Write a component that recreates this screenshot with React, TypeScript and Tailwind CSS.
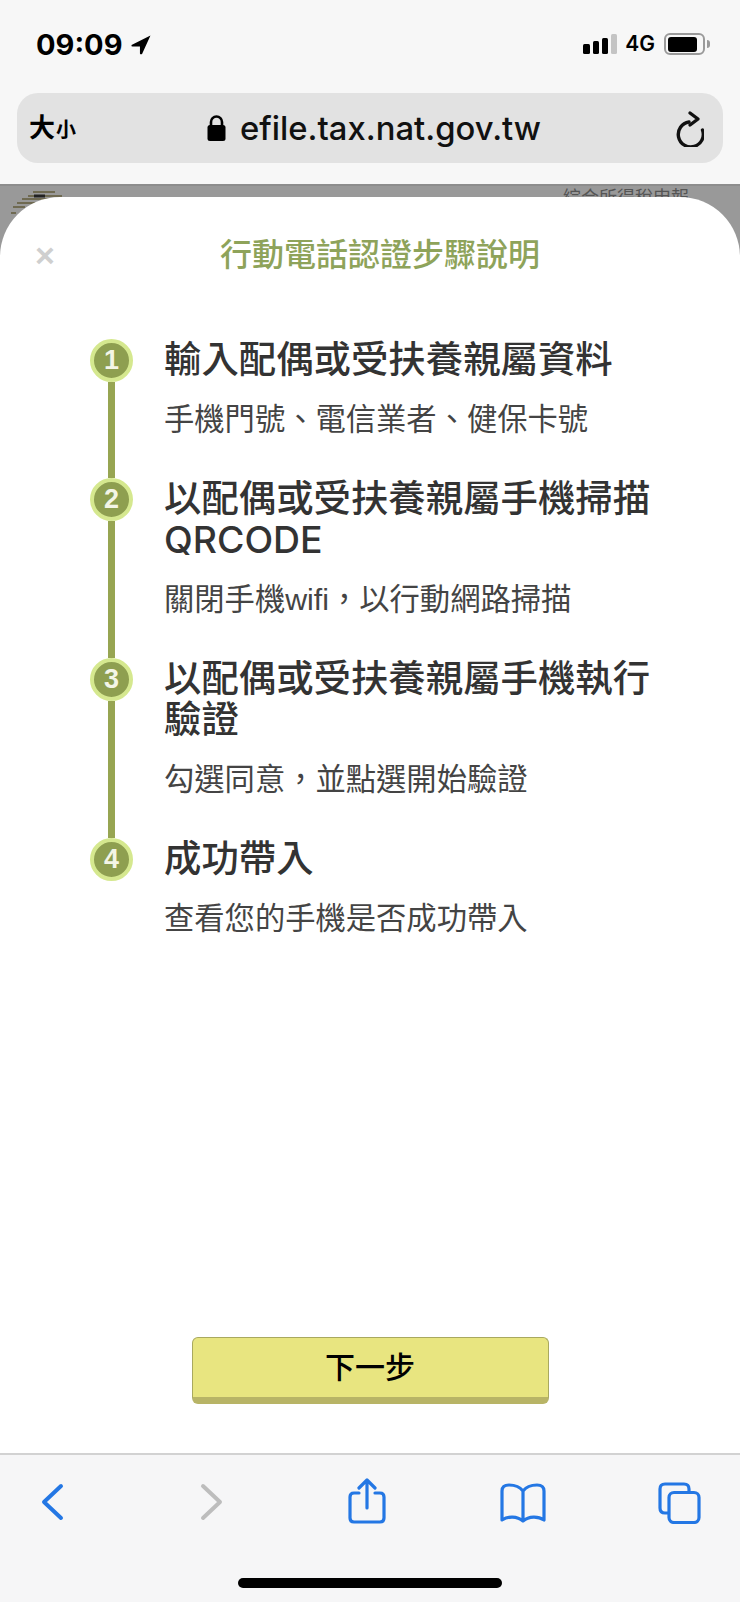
const cjk = "font-['Liberation_Sans','Noto_Sans_CJK_TC',sans-serif]";
const heading = "font-['Inter','Noto_Sans_CJK_TC',sans-serif]";
const comma = '\uFF0C';

const steps = [
  { n: 1, title: '輸入配偶或受扶養親屬資料', desc: '手機門號、電信業者、健保卡號' },
  { n: 2, title: '以配偶或受扶養親屬手機掃描 QRCODE', desc: `關閉手機wifi${comma}以行動網路掃描` },
  { n: 3, title: '以配偶或受扶養親屬手機執行驗證', desc: `勾選同意${comma}並點選開始驗證` },
  { n: 4, title: '成功帶入', desc: '查看您的手機是否成功帶入' },
];

function StatusBar() {
  return (
    <div className="flex h-[93px] items-start pl-[36px] pr-[30px] pt-[30px]">
      <span className="font-['Inter',sans-serif] text-[29px] font-bold leading-[30px] text-black">09:09</span>
      <svg className="ml-[9px] mt-[5px]" width="20" height="20" viewBox="0 0 19 19">
        <path d="M18.5 0.5 L0.5 9.5 Q0 11 1.5 11 L8.5 11 L8.5 17.5 Q9 19 10.5 18 Z" fill="#000" />
      </svg>
      <div className="ml-auto mt-[4px] flex items-end gap-[3px]">
        <div className="h-[10px] w-[7px] rounded-[1.5px] bg-black" />
        <div className="h-[13px] w-[6px] rounded-[1.5px] bg-black" />
        <div className="h-[16px] w-[6px] rounded-[1.5px] bg-black" />
        <div className="h-[20px] w-[6px] rounded-[1.5px] bg-[#c4c4c4]" />
      </div>
      <span className="ml-[8px] mt-[1px] font-['Inter',sans-serif] text-[21px] font-semibold leading-[26px] text-black">4G</span>
      <div className="ml-[9px] mt-[3px] flex h-[22px] w-[41px] items-center rounded-[6px] border-2 border-[#9a9a9a] p-[1.5px]">
        <div className="h-full w-[29px] rounded-[3px] bg-black" />
      </div>
      <div className="ml-[2px] mt-[10px] h-[8px] w-[3px] rounded-r-full bg-[#9a9a9a]" />
    </div>
  );
}

function UrlBar() {
  return (
    <div className="mx-[17px] flex h-[70px] items-center rounded-[21px] bg-[#e2e2e2] pl-[12px] pr-[19px]">
      <div className={`flex w-[49px] items-baseline font-bold text-black ${cjk}`}>
        <span className="text-[26px] leading-none">大</span>
        <span className="ml-[1px] text-[20px] leading-none">小</span>
      </div>
      <svg className="ml-[129px]" width="19" height="26" viewBox="0 0 19 26">
        <path d="M4 11 V7 a5.5 5.5 0 0 1 11 0 V11" fill="none" stroke="#000" strokeWidth="2.6" />
        <rect x="0.5" y="10" width="18" height="16" rx="2.5" fill="#000" />
      </svg>
      <span className="ml-[14px] font-['Inter',sans-serif] text-[32.8px] font-medium leading-none text-[#111]">efile.tax.nat.gov.tw</span>
      <svg className="ml-auto" width="30" height="38" viewBox="0 0 30 38">
        <path d="M15 13 A12.5 12.5 0 1 0 28.5 21" fill="none" stroke="#111" strokeWidth="3.4" strokeLinecap="round" />
        <path d="M16 4 L24 10 L16 16" fill="none" stroke="#111" strokeWidth="3.4" strokeLinecap="round" strokeLinejoin="round" />
      </svg>
    </div>
  );
}

function StepRow({ n, title, desc, last }: { n: number; title: string; desc: string; last: boolean }) {
  return (
    <div className="flex">
      <div className="flex w-[43px] shrink-0 flex-col items-center">
        <div className="flex h-[43px] w-[43px] shrink-0 items-center justify-center rounded-full border-[4px] border-[#d5e88f] bg-[#8e9f50] font-['Liberation_Sans',sans-serif] text-[27px] font-bold leading-none text-[#f3f5e6]">
          {n}
        </div>
        {!last && <div className="w-[7px] flex-1 bg-[#97a552]" />}
      </div>
      <div className={`ml-[31px] w-[500px] ${last ? '' : 'pb-[38px]'}`}>
        <div className={`text-[37.4px] font-medium leading-[41px] text-[#333] ${heading}`}>{title}</div>
        <div className={`mt-[19px] text-[30.3px] leading-[41px] text-[#444] ${cjk}`}>{desc}</div>
      </div>
    </div>
  );
}

function Sheet() {
  return (
    <div className="relative flex flex-1 flex-col rounded-t-[60px] bg-white">
      <div className="flex items-center pt-[37px]">
        <span className="ml-[34px] w-[22px] text-center font-['Liberation_Sans',sans-serif] text-[34px] font-bold leading-[42px] text-[#cfcfcf]">×</span>
        <h1 className={`flex-1 pr-[36px] text-center text-[32px] font-medium leading-[42px] text-[#8ea35a] ${cjk}`}>行動電話認證步驟說明</h1>
      </div>
      <div className="ml-[90px] mt-[63px]">
        {steps.map((s, i) => (
          <StepRow key={s.n} n={s.n} title={s.title} desc={s.desc} last={i === steps.length - 1} />
        ))}
      </div>
      <div className="mb-[49px] mt-auto flex justify-center">
        <button className={`h-[67px] w-[357px] rounded-[6px] border border-[#a9a95f] border-b-[7px] border-b-[#b8b466] bg-[#e8e580] text-[30px] font-medium text-black ${cjk}`}>
          下一步
        </button>
      </div>
    </div>
  );
}

function Toolbar() {
  const blue = '#2477e4';
  return (
    <div className="relative h-[149px] border-t-2 border-[#d2d2d2] bg-[#f6f6f7]">
      <div className="flex items-start pl-[41px] pt-[23px]">
        <svg className="mt-[5px]" width="24" height="38" viewBox="0 0 24 38">
          <path d="M20 3 L3 19 L20 35" fill="none" stroke={blue} strokeWidth="4" strokeLinecap="round" strokeLinejoin="round" />
        </svg>
        <svg className="ml-[135px] mt-[5px]" width="24" height="38" viewBox="0 0 24 38">
          <path d="M3 3 L20 19 L3 35" fill="none" stroke="#bdbdbd" strokeWidth="4" strokeLinecap="round" strokeLinejoin="round" />
        </svg>
        <svg className="ml-[124px]" width="38" height="46" viewBox="0 0 38 46">
          <path d="M11 15 H6 Q2 15 2 19 V40 Q2 44 6 44 H32 Q36 44 36 40 V19 Q36 15 32 15 H27" fill="none" stroke={blue} strokeWidth="3.2" strokeLinecap="round" />
          <path d="M19 30 V3 M11 10 L19 2 L27 10" fill="none" stroke={blue} strokeWidth="3.2" strokeLinecap="round" strokeLinejoin="round" />
        </svg>
        <svg className="ml-[114px] mt-[5px]" width="46" height="40" viewBox="0 0 46 40">
          <path d="M23 8 C20 4 15 2 9 2 Q2 2 2 8 V37 C8 33 17 33 23 38 C29 33 38 33 44 37 V8 Q44 2 37 2 C31 2 26 4 23 8 Z M23 8 V38" fill="none" stroke={blue} strokeWidth="3.2" strokeLinejoin="round" strokeLinecap="round" />
        </svg>
        <svg className="ml-[112px] mt-[4px]" width="43" height="42" viewBox="0 0 43 42">
          <path d="M10 31 H7 Q2 31 2 26 V7 Q2 2 7 2 H26 Q31 2 31 7 V10" fill="none" stroke={blue} strokeWidth="3.2" />
          <rect x="11" y="10.5" width="30" height="30" rx="5" fill="none" stroke={blue} strokeWidth="3.2" />
        </svg>
      </div>
      <div className="absolute bottom-[14px] left-[238px] h-[10px] w-[264px] rounded-full bg-black" />
    </div>
  );
}

export default function App() {
  return (
    <div className="flex h-[1602px] w-[740px] flex-col overflow-hidden bg-[#f7f7f7]">
      <div className="h-[184px] shrink-0">
        <StatusBar />
        <UrlBar />
      </div>
      <div className="relative flex flex-1 flex-col border-t-2 border-[#8d8d8d] bg-[#999] pt-[11px]">
        <svg className="absolute left-0 top-0" width="70" height="50" viewBox="0 0 70 50">
          <path d="M33 6 H55 M28 10 H62 M22 13 H63 M17 17 H35 M13 21 H25 M11 27 H16" stroke="#6f6a52" strokeWidth="2" />
          <path d="M34 10 H45" stroke="#222" strokeWidth="3" />
        </svg>
        <span className={`absolute left-[563px] top-[2px] text-[18px] leading-[20px] text-[#555] ${cjk}`}>綜合所得稅申報</span>
        <Sheet />
        <Toolbar />
      </div>
    </div>
  );
}
